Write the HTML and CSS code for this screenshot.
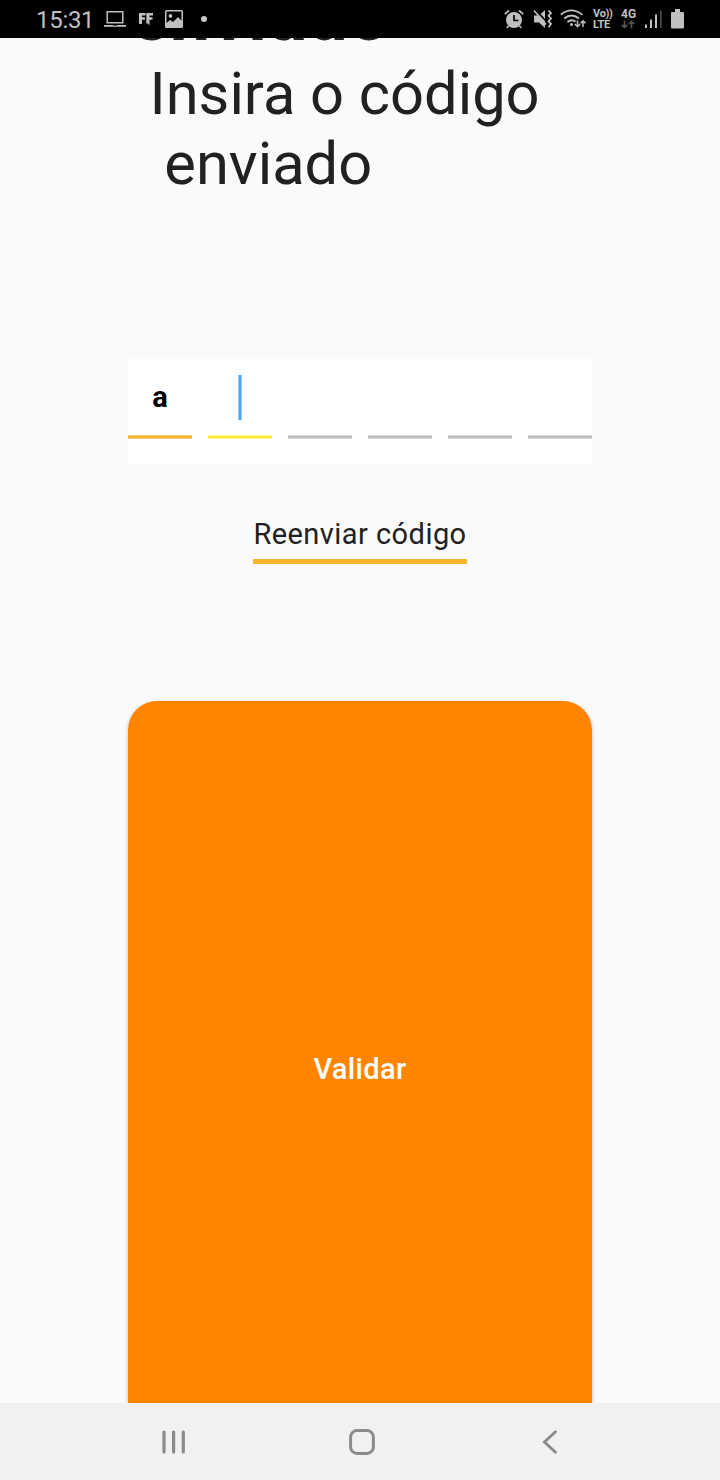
FILE: index.html
```html
<!DOCTYPE html>
<html lang="pt-BR">
<head>
<meta charset="utf-8">
<title>Validar código</title>
<link rel="stylesheet" href="styles.css">
</head>
<body>
<div class="phone">
  <header class="status">
    <div class="status-left">
      <span class="clock">15:31</span>
      <svg class="laptop" width="22" height="18" viewBox="0 0 22 18"><path d="M3.2 1.7h15.6v11H3.2z" fill="none" stroke="#c0c0c0" stroke-width="1.5"/><path d="M0 15h22v1.8H0z" fill="#c0c0c0"/><path d="M9 15h4v.8H9z" fill="#333"/></svg>
      <svg class="ff" width="14" height="14" viewBox="0 0 14 14" fill="#c0c0c0"><path d="M0 1h6.500v2.500H3v1.700h3v2.500H3V12H0zM7.300 1H14v2.500h-3.500v1.700h3v2.500h-3V13.500L8.800 11.500H7.300z"/></svg>
      <svg class="photo" width="18" height="18" viewBox="0 0 18 18"><path fill="#c0c0c0" fill-rule="evenodd" d="M1.500 0h15Q18 0 18 1.500v15q0 1.500-1.500 1.500h-15Q0 18 0 16.500v-15Q0 0 1.500 0zM1.500 1.500v11.500L5 10l3 2 5-5 3.500 3.500v-9zM5.500 4a1.900 1.900 0 1 1 0 3.800 1.900 1.900 0 0 1 0-3.800z"/></svg>
      <span class="dot"></span>
    </div>
    <div class="status-right">
      <svg width="20" height="20" viewBox="0 0 20 20"><circle cx="10" cy="11" r="8" fill="#c0c0c0"/><path d="M.8 5.200 5 1.500M19.200 5.200 15 1.500M4.500 17 2.800 18.800M15.500 17l1.700 1.800" stroke="#c0c0c0" stroke-width="1.700"/><path d="M10 6v5.500h4.500" fill="none" stroke="#000" stroke-width="1.700"/></svg>
      <svg class="mute" width="20" height="20" viewBox="0 0 20 20"><path d="M1 6.500h5L12 1v18l-6-5.500H1z" fill="#c0c0c0"/><path d="M2 .5l11 11.500" stroke="#000" stroke-width="1.800"/><path d="M1 1.500l12 14" stroke="#c0c0c0" stroke-width="1.600"/><path d="M15.500 1.500l2.500 2.600-2.500 2.700 2.500 2.700-2.500 2.700 2.500 2.700-2.500 3.300" fill="none" stroke="#c0c0c0" stroke-width="1.800"/></svg>
      <svg class="wifi" width="26" height="20" viewBox="0 0 26 20" fill="none" stroke="#c0c0c0" stroke-width="1.800"><path d="M.8 5.800q10.500-8.800 21.500 0M4.200 9.500q7.300-6.100 14.800 0M7.500 13q4-3.400 8-.3"/><circle cx="11.500" cy="15.500" r="1.500" fill="#c0c0c0" stroke="none"/><path d="M17.500 11.500v6M14.800 15l2.700 2.700 2.700-2.700M23 18v-6M20.600 14.300 23 11.900l2.500 2.400" stroke-width="1.500"/></svg>
      <div class="volte"><span>Vo))</span><span>LTE</span></div>
      <div class="data"><span>4G</span><svg width="14" height="9" viewBox="0 0 14 9" fill="none" stroke="#555" stroke-width="1.600"><path d="M3.500.500v7M.700 4.800l2.800 2.700 2.800-2.700M10.500 8.500v-7M7.700 4.200l2.800-2.700 2.800 2.700"/></svg></div>
      <svg class="signal" width="17" height="19" viewBox="0 0 17 19" fill="#c0c0c0"><path d="M0 14.500h2V18H0zM5 9.500h2V18H5zM10 4.500h2V18h-2z"/><path d="M15 .5h1.700V18H15z" fill="#4a4a4a"/></svg>
      <svg class="battery" width="13" height="20" viewBox="0 0 13 20"><path d="M4 0h5v3h3q1 0 1 1v14.500q0 1-1 1H1q-1 0-1-1V4q0-1 1-1h3z" fill="#c0c0c0"/></svg>
    </div>
  </header>
  <main class="screen">
    <h1 class="headline">enviado</h1>
    <p class="title">Insira o código
 enviado</p>
    <div class="code">
      <div class="cell filled"><span class="char">a</span></div>
      <div class="cell active"><span class="caret"></span></div>
      <div class="cell"></div>
      <div class="cell"></div>
      <div class="cell"></div>
      <div class="cell"></div>
    </div>
    <a class="resend">Reenviar código</a>
    <button class="submit">Validar</button>
  </main>
  <nav class="nav">
    <svg width="24" height="26" viewBox="0 0 24 26" stroke="#8b8b8b" stroke-width="3.200" stroke-linecap="round"><path d="M2 3v20M11.600 3v20M21.300 3v20"/></svg>
    <svg class="home" width="26" height="26" viewBox="0 0 26 26"><rect x="1.600" y="1.600" width="22.800" height="22.800" rx="6.500" fill="none" stroke="#8b8b8b" stroke-width="3"/></svg>
    <svg width="16" height="26" viewBox="0 0 16 26"><path d="M13.500 2.700 2.500 13l11 10.300" fill="none" stroke="#8b8b8b" stroke-width="2.900" stroke-linecap="round"/></svg>
  </nav>
</div>
</body>
</html>
```
FILE: styles.css
```css
* { box-sizing: border-box; }
body { margin: 0; font-family: Roboto, "Liberation Sans", sans-serif; }
.phone { width: 720px; height: 1480px; display: flex; flex-direction: column; overflow: hidden; background: #fafafa; }
svg { display: block; flex: none; }

.status { flex: none; height: 38px; padding: 0 36px; display: flex; justify-content: space-between; align-items: center; background: #000; color: #c0c0c0; }
.status-left, .status-right { display: flex; align-items: center; height: 38px; }
.clock { width: 68px; font-size: 24px; line-height: 38px; padding-top: 2px; letter-spacing: -0.3px; }
.ff { margin-left: 13px; }
.photo { margin-left: 12px; }
.dot { width: 6px; height: 6px; margin-left: 18px; border-radius: 50%; background: #c8c8c8; }
.mute { margin-left: 9px; }
.wifi { margin-left: 7px; }
.volte { width: 20px; margin-left: 7px; display: flex; flex-direction: column; font-size: 11px; line-height: 11px; font-weight: 700; white-space: nowrap; letter-spacing: -0.3px; }
.data { width: 15px; margin-left: 8px; display: flex; flex-direction: column; gap: 1px; font-size: 12px; line-height: 10px; font-weight: 700; }
.signal { margin-left: 9px; }
.battery { margin-left: 9px; }

.screen { flex: 1; min-height: 0; overflow: hidden; display: flex; flex-direction: column; align-items: center; color: #212121; }
.headline { flex: none; align-self: flex-start; margin: -64px 0 0 130px; font-size: 72px; line-height: 84px; font-weight: 700; letter-spacing: 0.8px; }
.title { flex: none; align-self: flex-start; margin: 1px 0 0 149.5px; font-size: 59.6px; line-height: 70px; white-space: pre; }
.code { flex: none; width: 464px; height: 105px; margin-top: 160px; display: flex; gap: 16px; background: #fff; }
.cell { --line: #bdbdbd; --edge: #d6d6d6; width: 64px; height: 80px; padding-bottom: 3px; display: flex; align-items: center; justify-content: center; background: linear-gradient(var(--edge) 1px, var(--line) 1px 3px, var(--edge) 3px) bottom / 100% 4px no-repeat; }
.filled { --line: #f9b42d; --edge: #fbcf78; }
.active { --line: #ffeb3b; --edge: #fff28a; }
.char { font-size: 29px; line-height: 34px; font-weight: 700; color: #000; margin-top: -1px; }
.caret { width: 4px; height: 45px; border: solid #90c9f8; border-width: 0 1px; background: #4dabf5; }
.resend { flex: none; height: 54px; margin-top: 46px; padding-top: 7px; border-bottom: 5px solid #f9b42d; font-size: 29px; line-height: 34px; letter-spacing: 0.45px; }
.submit { flex: none; width: 464px; height: 736px; margin-top: 137px; padding: 0; border: 0; border-radius: 29px; background: #ff8500; color: #fff; font: 500 29px/34px Roboto, sans-serif; letter-spacing: 0.35px; box-shadow: 0 2px 4px rgba(0, 0, 0, .25); }

.nav { flex: none; height: 77px; padding: 0 162px; display: flex; align-items: center; justify-content: space-between; background: #f1f1f1; }
.home { margin-right: 5px; }
```
